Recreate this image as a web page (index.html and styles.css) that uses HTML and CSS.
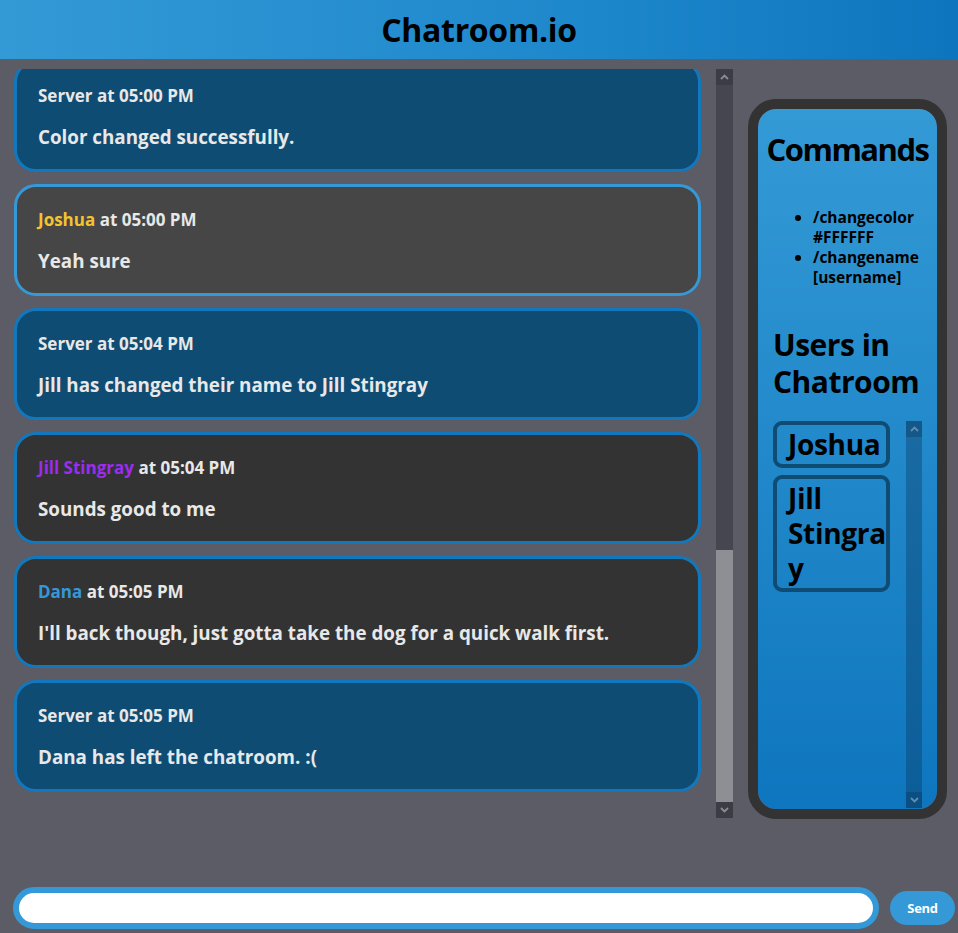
FILE: index.html
```html
<!DOCTYPE html>
<html lang="en">
<head>
<meta charset="utf-8">
<title>Chatroom.io</title>
<link rel="stylesheet" href="styles.css">
</head>
<body>
<header class="topbar"><h1 class="brand">Chatroom.io</h1></header>
<main class="main">
  <section class="chat-wrap">
    <div class="chat">
      <div class="msg server first"><div class="meta">Server at 05:00 PM</div><div class="text">Color changed successfully.</div></div>
      <div class="msg person light"><div class="meta"><span class="n-joshua">Joshua</span> at 05:00 PM</div><div class="text">Yeah sure</div></div>
      <div class="msg server"><div class="meta">Server at 05:04 PM</div><div class="text">Jill has changed their name to Jill Stingray</div></div>
      <div class="msg person"><div class="meta"><span class="n-jill">Jill Stingray</span> at 05:04 PM</div><div class="text">Sounds good to me</div></div>
      <div class="msg person"><div class="meta"><span class="n-dana">Dana</span> at 05:05 PM</div><div class="text">I'll back though, just gotta take the dog for a quick walk first.</div></div>
      <div class="msg server"><div class="meta">Server at 05:05 PM</div><div class="text">Dana has left the chatroom. :(</div></div>
    </div>
    <div class="vscroll">
      <div class="sb-btn"><svg width="9" height="6" viewBox="0 0 9 6"><path d="M1 5 L4.5 1.5 L8 5" fill="none" stroke="#8b8c92" stroke-width="1.8"/></svg></div>
      <div class="sb-space"></div>
      <div class="sb-thumb"></div>
      <div class="sb-btn"><svg width="9" height="6" viewBox="0 0 9 6"><path d="M1 1 L4.5 4.5 L8 1" fill="none" stroke="#8b8c92" stroke-width="1.8"/></svg></div>
    </div>
  </section>
  <aside class="side">
    <div class="side-inner">
      <h2 class="side-title">Commands</h2>
      <ul class="cmds">
        <li>/changecolor #FFFFFF</li>
        <li>/changename [username]</li>
      </ul>
      <h2 class="users-title">Users in Chatroom</h2>
      <div class="users">
        <div class="member-list">
          <div class="member">Joshua</div>
          <div class="member">Jill Stingray</div>
        </div>
        <div class="uscroll">
          <div class="ub-btn"><svg width="9" height="6" viewBox="0 0 9 6"><path d="M1 5 L4.5 1.5 L8 5" fill="none" stroke="#5f8db3" stroke-width="1.8"/></svg></div>
          <div class="ub-track"></div>
          <div class="ub-btn"><svg width="9" height="6" viewBox="0 0 9 6"><path d="M1 1 L4.5 4.5 L8 1" fill="none" stroke="#5f8db3" stroke-width="1.8"/></svg></div>
        </div>
      </div>
    </div>
  </aside>
</main>
<footer class="composer">
  <div class="field"><input class="input" type="text"></div>
  <button class="send" type="button">Send</button>
</footer>
</body>
</html>
```
FILE: styles.css
```css
* { box-sizing: border-box; }
html, body { margin: 0; padding: 0; }
body {
  background: #5b5c66;
  font-family: "Open Sans", "Lato", sans-serif;
  font-weight: 700;
  height: 933px;
  overflow: hidden;
}
.topbar {
  height: 59px;
  background: linear-gradient(to right, #349ad6, #1e88cc 60%, #0d75bd);
  display: flex;
  align-items: center;
  justify-content: center;
}
.brand {
  margin: 0;
  font-size: 32px;
  line-height: 40px;
  color: #000;
  font-weight: 700;
  letter-spacing: -0.3px;
}
.main {
  display: flex;
  align-items: flex-start;
  padding: 10px 11px 0 14px;
  gap: 15px;
}
.chat-wrap {
  display: flex;
  gap: 15px;
  height: 749px;
}
.chat {
  width: 687px;
  height: 100%;
  overflow: hidden;
  display: flex;
  flex-direction: column;
  gap: 12px;
}
.msg {
  height: 112px;
  flex-shrink: 0;
  border: 3px solid #1278be;
  border-radius: 22px;
  padding: 23px 21px 0;
  color: #e8e8e8;
}
.msg.first { margin-top: -9px; }
.msg.server { background: #0f4c73; }
.msg.person { background: #333333; }
.msg.light { background: #464646; border-color: #3499d6; }
.meta {
  font-size: 17px;
  line-height: 20px;
}
.text {
  margin-top: 19px;
  font-size: 18.8px;
  line-height: 24px;
}
.n-joshua { color: #f4c430; }
.n-jill { color: #9b2cf0; }
.n-dana { color: #3498d8; }

.vscroll {
  width: 17px;
  height: 100%;
  display: grid;
  grid-template-rows: 16px 1fr 252px 16px;
  background: #45464f;
}
.sb-btn {
  background: #3b3c45;
  display: flex;
  align-items: center;
  justify-content: center;
}
.sb-thumb { background: #8e8f95; }

.side {
  margin-top: 30px;
  width: 199px;
  height: 720px;
  border: 10px solid #333333;
  border-radius: 28px;
  overflow: hidden;
}
.side-inner {
  height: 100%;
  border-radius: 18px;
  background: linear-gradient(to bottom, #349ad6, #0e76be);
  padding: 0 15px 1px 15px;
  display: flex;
  flex-direction: column;
}
.side-title {
  margin: 20px -15px 0;
  text-align: center;
  font-size: 31px;
  line-height: 40px;
  letter-spacing: -1.5px;
  color: #000;
}
.cmds {
  margin: 38px 0 0;
  padding-left: 40px;
  font-size: 15.5px;
  line-height: 20px;
  color: #000;
}
.users-title {
  margin: 39px 0 0 0;
  font-size: 30px;
  line-height: 37px;
  letter-spacing: -0.5px;
  color: #000;
}
.users {
  margin-top: 21px;
  flex: 1;
  min-height: 0;
  display: flex;
  justify-content: space-between;
}
.member-list {
  display: flex;
  flex-direction: column;
  align-items: flex-start;
  gap: 7px;
}
.member {
  width: 117px;
  border: 4px solid #0f4c73;
  border-radius: 9px;
  padding: 2px 0 2px 11px;
  font-size: 28px;
  line-height: 35px;
  letter-spacing: -0.3px;
  color: #000;
  overflow-wrap: anywhere;
}
.uscroll {
  width: 16px;
  display: flex;
  flex-direction: column;
  background: rgba(10, 50, 85, 0.35);
}
.ub-btn {
  height: 16px;
  background: rgba(10, 45, 80, 0.3);
  display: flex;
  align-items: center;
  justify-content: center;
}
.ub-track { flex: 1; }

.composer {
  position: fixed;
  left: 0;
  right: 0;
  bottom: 4px;
  display: flex;
  align-items: center;
  padding: 0 3px 0 13px;
  gap: 11px;
}
.field {
  flex: 1;
  height: 42px;
  border: 6px solid #3499d6;
  border-radius: 21px;
  background: #3499d6;
}
.input {
  display: block;
  width: 100%;
  height: 100%;
  border: none;
  border-radius: 15px;
  background: #fff;
  outline: none;
  font: inherit;
}
.send {
  width: 65px;
  height: 34px;
  border: none;
  border-radius: 17px;
  background: #3499d6;
  color: #fff;
  font-family: inherit;
  font-weight: 700;
  font-size: 13px;
  letter-spacing: -0.3px;
}
```
